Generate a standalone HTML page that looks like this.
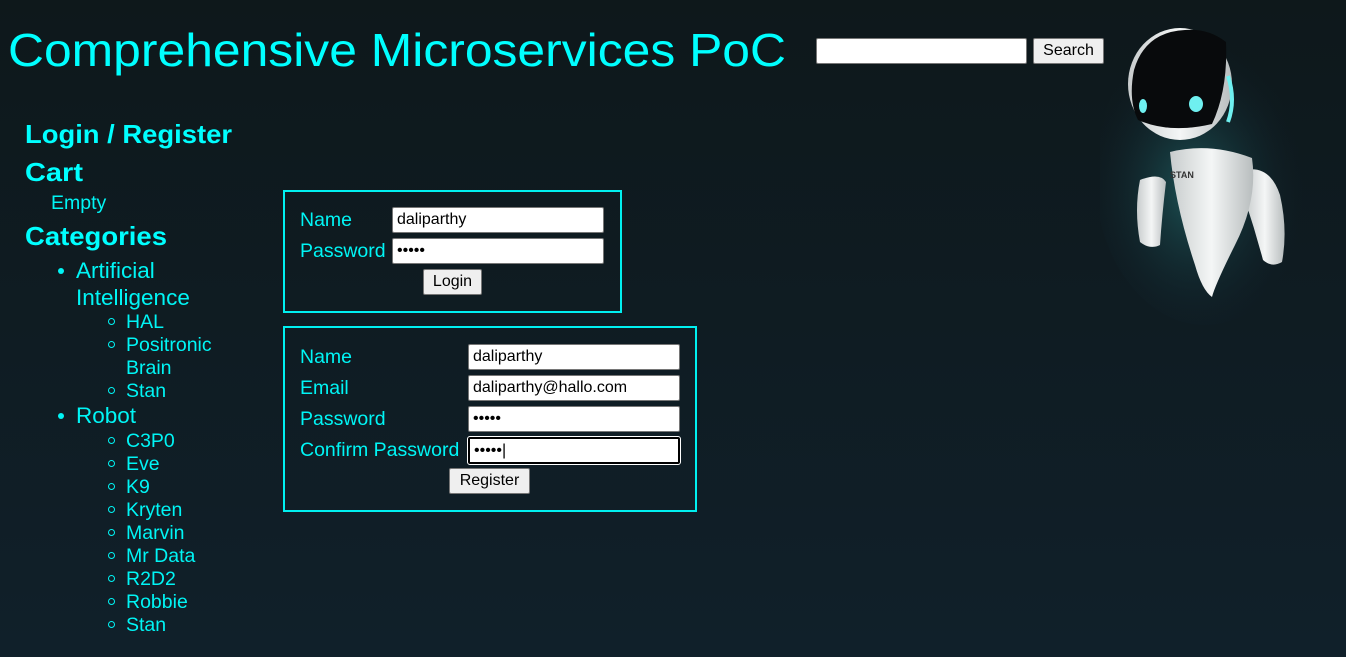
<!DOCTYPE html>
<html><head><meta charset="utf-8">
<style>
*{margin:0;padding:0;box-sizing:border-box}
html,body{width:1346px;height:657px;overflow:hidden}
body{background:linear-gradient(180deg,#0e181b 0%,#10202a 100%);font-family:"Liberation Sans",Arial,sans-serif;color:#00f5f5;position:relative}
.a{position:absolute;white-space:nowrap}
.inp{position:absolute;background:#fff;border:1px solid #767676;border-radius:2px;font-size:16px;color:#000;padding:3px 4px;line-height:18px;font-family:"Liberation Sans",Arial,sans-serif}
.btn{position:absolute;background:#efefef;border:1px solid #767676;border-radius:2px;font-size:16px;color:#000;text-align:center;line-height:24px}
.box{position:absolute;border:2px solid #00f0f0}
.lbl{position:absolute;font-size:19.5px;color:#00f5f5;white-space:nowrap}
.sub{font-size:19.5px;line-height:23px}
.dot{position:absolute;width:6px;height:6px;border-radius:50%;background:#00f5f5}
.cir{position:absolute;width:7px;height:7px;border-radius:50%;border:1.3px solid #00f5f5}
</style></head><body>
<svg class="a" style="left:0;top:0" width="1100" height="260">
<text x="8" y="66" font-family="Liberation Sans" font-size="46" fill="#00ffff" textLength="778" lengthAdjust="spacingAndGlyphs">Comprehensive Microservices PoC</text>
<text x="25" y="143" font-family="Liberation Sans" font-size="26" font-weight="bold" fill="#00ffff" textLength="207" lengthAdjust="spacingAndGlyphs">Login / Register</text>
<text x="25" y="181" font-family="Liberation Sans" font-size="26" font-weight="bold" fill="#00ffff" textLength="58" lengthAdjust="spacingAndGlyphs">Cart</text>
<text x="25" y="245" font-family="Liberation Sans" font-size="26" font-weight="bold" fill="#00ffff" textLength="142" lengthAdjust="spacingAndGlyphs">Categories</text>
</svg>
<div class="inp" style="left:816px;top:38px;width:211px;height:26px"></div>
<div class="btn" style="left:1033px;top:38px;width:71px;height:26px">Search</div>

<div class="a" style="left:51px;top:192px;font-size:19.5px">Empty</div>
<div class="dot" style="left:58px;top:268px"></div>
<div class="a" style="left:76px;top:257px;font-size:22.5px;line-height:27px">Artificial<br>Intelligence</div>
<div class="a sub" style="left:126px;top:311px">HAL<br>Positronic<br>Brain<br>Stan</div>
<div class="cir" style="left:108px;top:318px"></div>
<div class="cir" style="left:108px;top:341px"></div>
<div class="cir" style="left:108px;top:387px"></div>
<div class="dot" style="left:58px;top:413px"></div>
<div class="a" style="left:76px;top:402px;font-size:22.5px;line-height:27px">Robot</div>
<div class="a sub" style="left:126px;top:430px">C3P0<br>Eve<br>K9<br>Kryten<br>Marvin<br>Mr Data<br>R2D2<br>Robbie<br>Stan</div>
<div class="cir" style="left:108px;top:437px"></div>
<div class="cir" style="left:108px;top:460px"></div>
<div class="cir" style="left:108px;top:483px"></div>
<div class="cir" style="left:108px;top:506px"></div>
<div class="cir" style="left:108px;top:529px"></div>
<div class="cir" style="left:108px;top:552px"></div>
<div class="cir" style="left:108px;top:575px"></div>
<div class="cir" style="left:108px;top:598px"></div>
<div class="cir" style="left:108px;top:621px"></div>

<div class="box" style="left:283px;top:190px;width:339px;height:123px"></div>
<div class="lbl" style="left:300px;top:209px">Name</div>
<div class="lbl" style="left:300px;top:240px">Password</div>
<div class="inp" style="left:392px;top:207px;width:212px;height:26px">daliparthy</div>
<div class="inp" style="left:392px;top:238px;width:212px;height:26px">•••••</div>
<div class="btn" style="left:423px;top:269px;width:59px;height:26px">Login</div>

<div class="box" style="left:283px;top:326px;width:414px;height:186px"></div>
<div class="lbl" style="left:300px;top:346px">Name</div>
<div class="lbl" style="left:300px;top:377px">Email</div>
<div class="lbl" style="left:300px;top:408px">Password</div>
<div class="lbl" style="left:300px;top:439px">Confirm Password</div>
<div class="inp" style="left:468px;top:344px;width:212px;height:26px">daliparthy</div>
<div class="inp" style="left:468px;top:375px;width:212px;height:26px">daliparthy@hallo.com</div>
<div class="inp" style="left:468px;top:406px;width:212px;height:26px">•••••</div>
<div class="inp" style="left:468px;top:437px;width:212px;height:27px;border:2px solid #000;outline:1px solid #fff">•••••|</div>
<div class="btn" style="left:449px;top:468px;width:81px;height:26px">Register</div>

<svg class="a" style="left:1100px;top:0" width="246" height="330">
<defs>
<radialGradient id="g" cx="0.45" cy="0.55" r="0.5"><stop offset="0" stop-color="#1e5a5c" stop-opacity="0.9"/><stop offset="1" stop-color="#10202a" stop-opacity="0"/></radialGradient>
<linearGradient id="w" x1="0" x2="1"><stop offset="0" stop-color="#c8cccd"/><stop offset="0.5" stop-color="#f4f6f6"/><stop offset="1" stop-color="#b8bdbe"/></linearGradient>
</defs>
<ellipse cx="105" cy="175" rx="110" ry="150" fill="url(#g)"/>
<path d="M40 180 Q60 172 66 182 Q62 215 60 245 Q50 250 40 242 Q34 210 40 180 Z" fill="url(#w)"/>
<path d="M145 170 Q170 165 180 195 Q188 230 182 262 Q172 268 163 260 Q155 230 145 200 Z" fill="url(#w)"/>
<path d="M70 152 Q110 142 152 158 Q158 200 135 245 Q115 285 112 297 Q102 290 95 265 Q75 205 70 152 Z" fill="url(#w)"/>
<ellipse cx="80" cy="84" rx="52" ry="56" fill="url(#w)"/>
<path d="M85 30 Q45 32 34 70 Q28 100 38 120 Q70 134 112 124 Q128 90 126 42 Q108 28 85 30 Z" fill="#080a0c"/>
<ellipse cx="96" cy="104" rx="7" ry="8" fill="#6ff0f0"/>
<ellipse cx="43" cy="106" rx="4" ry="7" fill="#6ff0f0"/>
<path d="M128 76 Q136 100 128 122" stroke="#6ff0f0" stroke-width="4" fill="none"/>
<text x="70" y="178" font-family="Liberation Sans" font-size="9" font-weight="bold" fill="#333">STAN</text>
</svg>
</body></html>
